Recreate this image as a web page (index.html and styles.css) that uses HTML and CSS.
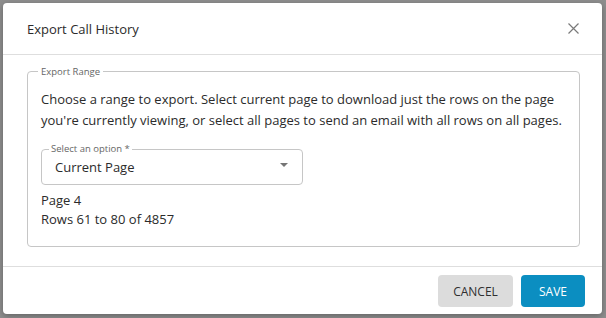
FILE: index.html
```html
<!DOCTYPE html>
<html lang="en">
<head>
    <meta charset="UTF-8">
    <meta name="viewport" content="width=device-width, initial-scale=1.0">
    <title>Export Call History</title>
    <link rel="stylesheet" href="styles.css">
</head>
<body>
    <div class="backdrop">
        <div class="modal">
            <div class="modal-header">
                <h2>Export Call History</h2>
                <button class="close-btn" aria-label="Close">
                    <svg width="11" height="11" viewBox="0 0 11 11">
                        <path d="M0.5 0.5L10.5 10.5M10.5 0.5L0.5 10.5" stroke="#7a7a7a" stroke-width="1.2" fill="none"/>
                    </svg>
                </button>
            </div>
            <div class="modal-body">
                <fieldset class="range">
                    <legend>Export Range</legend>
                    <p class="intro">Choose a range to export. Select current page to download just the rows on the page you're currently viewing, or select all pages to send an email with all rows on all pages.</p>
                    <div class="select-box">
                        <span class="select-label">Select an option *</span>
                        <span class="select-value">Current Page</span>
                        <span class="caret"></span>
                    </div>
                    <div class="page-info">
                        <div>Page 4</div>
                        <div>Rows 61 to 80 of 4857</div>
                    </div>
                </fieldset>
            </div>
            <div class="modal-footer">
                <button class="btn btn-cancel">Cancel</button>
                <button class="btn btn-save">Save</button>
            </div>
        </div>
    </div>
</body>
</html>
```

FILE: styles.css
```css
body {
    font-family: "Open Sans", Arial, sans-serif;
    margin: 0;
    padding: 0;
    background-color: #8e8e8e;
    color: #2b2b2b;
}
.backdrop {
    padding: 3px 4px 4px 3px;
}
.modal {
    background-color: #ffffff;
    border-radius: 4px;
    height: 311px;
    display: flex;
    flex-direction: column;
    box-shadow: 0 2px 6px rgba(0, 0, 0, 0.3);
}
.modal-header {
    flex-shrink: 0;
    display: flex;
    align-items: center;
    justify-content: space-between;
    height: 51px;
    padding: 0 23px 0 24px;
    border-bottom: 1px solid #dedede;
}
.modal-header h2 {
    margin: 0;
    font-size: 13px;
    font-weight: 400;
    color: #2b2b2b;
}
.close-btn {
    background: none;
    border: none;
    padding: 0;
    width: 11px;
    height: 11px;
    display: flex;
    cursor: pointer;
}
.modal-body {
    flex: 1;
    padding: 10px 22px 0 24px;
}
.range {
    margin: 0;
    padding: 11px 13px 17px 13px;
    border: 1px solid #c6c6c6;
    border-radius: 4px;
}
.range legend {
    font-size: 9.5px;
    line-height: 13px;
    color: #666;
    padding: 0 3px;
    margin-left: -3px;
}
.intro {
    margin: 0 0 18px 0;
    font-size: 13px;
    line-height: 21px;
}
.select-box {
    position: relative;
    width: 262px;
    height: 36px;
    box-sizing: border-box;
    padding: 0 13px;
    border: 1px solid #c6c6c6;
    border-radius: 4px;
    display: flex;
    align-items: center;
}
.select-label {
    position: absolute;
    top: -6px;
    left: 7px;
    padding: 0 2px;
    background-color: #ffffff;
    font-size: 9.5px;
    line-height: 10px;
    color: #666;
}
.select-value {
    font-size: 13px;
}
.caret {
    position: absolute;
    right: 14px;
    top: 13px;
    width: 0;
    height: 0;
    border-left: 4px solid transparent;
    border-right: 4px solid transparent;
    border-top: 4px solid #757575;
}
.page-info {
    margin-top: 6px;
    font-size: 13px;
    line-height: 19px;
}
.modal-footer {
    flex-shrink: 0;
    display: flex;
    justify-content: flex-end;
    gap: 8px;
    padding: 8px 17px 7px 0;
    border-top: 1px solid #dedede;
}
.btn {
    height: 32px;
    border: none;
    border-radius: 4px;
    font-family: "Open Sans", Arial, sans-serif;
    font-size: 12px;
    text-transform: uppercase;
    cursor: pointer;
}
.btn-cancel {
    width: 75px;
    background-color: #dcdcdc;
    color: #2f2f2f;
}
.btn-save {
    width: 64px;
    background-color: #0b8ec1;
    color: #ffffff;
}
```
